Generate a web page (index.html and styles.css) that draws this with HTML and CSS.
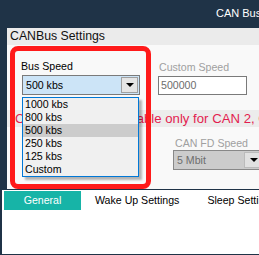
FILE: index.html
```html
<!DOCTYPE html>
<html>
<head>
<meta charset="utf-8">
<link rel="stylesheet" href="styles.css">
</head>
<body>
<div class="titlebar"><span class="title">CAN Bus Configuration</span></div>
<div class="settings">
  <div class="settings-header">CANBus Settings</div>
  <div class="fields">
    <div class="row">
      <div class="field bus">
        <div class="label">Bus Speed</div>
        <div class="combo selected">
          <span class="combo-text">500 kbs</span>
          <span class="combo-btn"><span class="arrow"></span></span>
        </div>
      </div>
      <div class="field custom">
        <div class="label disabled">Custom Speed</div>
        <div class="textbox">500000</div>
      </div>
    </div>
    <div class="note">CAN FD Speed available only for CAN 2, CAN 3</div>
    <div class="field fd">
      <div class="label disabled">CAN FD Speed</div>
      <div class="combo off">
        <span class="combo-text">5 Mbit</span>
        <span class="combo-btn"><span class="arrow"></span></span>
      </div>
    </div>
  </div>
  <ul class="droplist">
    <li>1000 kbs</li>
    <li>800 kbs</li>
    <li class="hover">500 kbs</li>
    <li>250 kbs</li>
    <li>125 kbs</li>
    <li>Custom</li>
  </ul>
  <div class="highlight"></div>
</div>
<div class="tabpanel">
  <div class="tabs">
    <div class="tab active">General</div>
    <div class="tab">Wake Up Settings</div>
    <div class="tab">Sleep Settings</div>
  </div>
</div>
</body>
</html>
```
FILE: styles.css
```css
html, body {
  margin: 0;
  padding: 0;
}
body {
  width: 259px;
  height: 255px;
  overflow: hidden;
  background: #1f3347;
  font-family: "Liberation Sans", Arial, sans-serif;
  font-size: 10.6px;
  color: #000;
}
.titlebar {
  height: 28px;
  display: flex;
  align-items: center;
  padding-left: 216px;
  white-space: nowrap;
  overflow: hidden;
}
.title {
  color: #ffffff;
  font-size: 11px;
  margin-top: -3px;
}
.settings {
  position: relative;
  margin-left: 7px;
  height: 161px;
  background: #f9f9f9;
  overflow: hidden;
}
.settings-header {
  height: 17px;
  line-height: 17px;
  background: #ebebeb;
  font-size: 12.3px;
  padding-left: 3px;
  color: #111;
}
.fields {
  padding-left: 14px;
}
.row {
  display: flex;
  padding-top: 14px;
}
.field {
  display: flex;
  flex-direction: column;
}
.label {
  height: 16px;
  line-height: 14px;
}
.label.disabled {
  color: #a0a0a0;
}
.bus {
  width: 137px;
}
.custom {
  margin-top: 1px;
}
.custom .label {
  padding-left: 1px;
}
.combo {
  display: flex;
  align-items: center;
  box-sizing: border-box;
  height: 20px;
  border: 1px solid #7a7a7a;
  padding: 1px;
}
.bus .combo {
  width: 118px;
  margin-left: 1px;
}
.combo.selected {
  background: #cce4f7;
}
.combo-text {
  flex: 1;
  padding-left: 2px;
}
.combo-btn {
  width: 17px;
  height: 16px;
  box-sizing: border-box;
  border: 1px solid #a0a0a0;
  background: #e5e5e5;
  display: flex;
  align-items: center;
  justify-content: center;
}
.arrow {
  width: 0;
  height: 0;
  border-left: 4px solid transparent;
  border-right: 4px solid transparent;
  border-top: 4px solid #000;
}
.textbox {
  box-sizing: border-box;
  width: 89px;
  height: 19px;
  border: 1px solid #7a7a7a;
  background: #fff;
  color: #6d6d6d;
  padding-left: 2px;
  line-height: 17px;
}
.note {
  margin-top: 15px;
  margin-left: -14px;
  height: 17px;
  line-height: 17px;
  background: #ececec;
  color: #e31c4f;
  font-size: 13.2px;
  white-space: nowrap;
  padding-left: 8px;
}
.fd {
  margin-left: 152px;
  margin-top: 9px;
}
.fd .label {
  padding-left: 2px;
  height: 14px;
}
.fd .combo {
  width: 92px;
  background: #cccccc;
  border-color: #888;
  color: #6d6d6d;
}
.fd .combo-btn {
  width: 19px;
  background: #e1e1e1;
  border-color: #bbb;
}
.droplist {
  position: absolute;
  left: 15px;
  top: 69px;
  width: 117px;
  height: 80px;
  box-sizing: border-box;
  margin: 0;
  padding: 0;
  list-style: none;
  border: 1px solid #0078d7;
  background: #f0f0f0;
  box-shadow: 3px 3px 2px rgba(0, 0, 0, 0.28);
}
.droplist li {
  height: 13px;
  line-height: 13px;
  padding-left: 2px;
}
.droplist li.hover {
  background: #cccccc;
}
.highlight {
  position: absolute;
  left: 3px;
  top: 18px;
  width: 141px;
  height: 143px;
  box-sizing: border-box;
  border: 5px solid #ff1a1a;
  border-radius: 8px;
  pointer-events: none;
}
.tabpanel {
  margin-top: 1px;
  margin-left: 2px;
  height: 64px;
  background: #ffffff;
  overflow: hidden;
}
.tabs {
  display: flex;
  padding-top: 1px;
  padding-left: 2px;
  white-space: nowrap;
}
.tab {
  flex-shrink: 0;
  height: 19px;
  line-height: 19px;
  padding: 0 14px;
}
.tab.active {
  width: 77px;
  box-sizing: border-box;
  padding: 0;
  text-align: center;
  background: #17b4a7;
  color: #fff;
}
```
